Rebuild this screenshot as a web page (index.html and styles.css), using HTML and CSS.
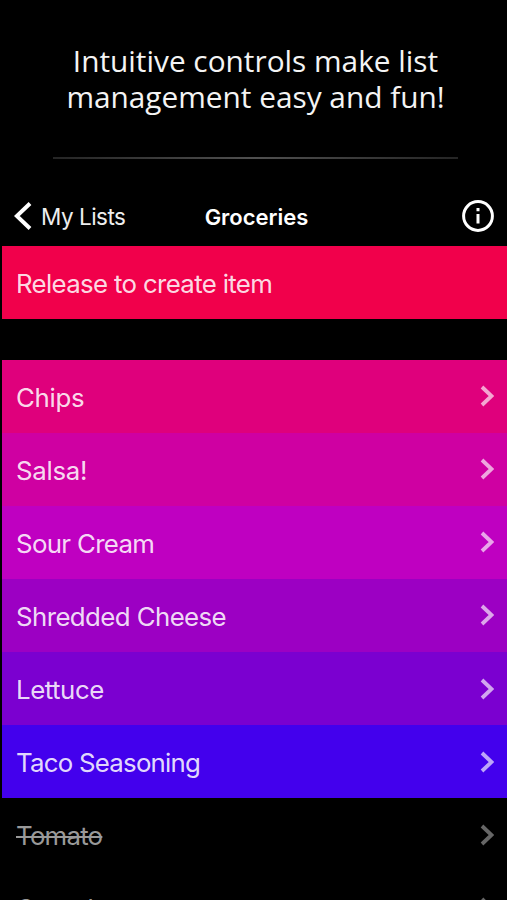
FILE: index.html
```html
<!DOCTYPE html>
<html lang="en">
<head>
<meta charset="utf-8">
<title>Groceries</title>
<link rel="stylesheet" href="styles.css">
</head>
<body>
<svg class="defs" aria-hidden="true"><symbol id="chevron" viewBox="0 0 14 22"><path d="M2 2 11.5 11 2 20"/></symbol></svg>
<main class="screen">
  <h1 class="headline">Intuitive controls make list<br>management easy and fun!</h1>
  <hr class="divider">
  <section class="phone">
    <header class="nav">
      <a class="back"><svg class="back-icon" viewBox="0 0 18 30"><path d="M16 2.5 2.8 15 16 27.5"/></svg><span class="back-label">My Lists</span></a>
      <h2 class="title">Groceries</h2>
      <svg class="info" viewBox="0 0 32 32"><circle cx="16" cy="16" r="14.4"/><path d="M16 14v9.5M16 8v3.3"/></svg>
    </header>
    <div class="row create"><span class="label">Release to create item</span></div>
    <ul class="list">
      <li class="row chips"><span class="label">Chips</span><svg class="arrow"><use href="#chevron"/></svg></li>
      <li class="row salsa"><span class="label">Salsa!</span><svg class="arrow"><use href="#chevron"/></svg></li>
      <li class="row cream"><span class="label">Sour Cream</span><svg class="arrow"><use href="#chevron"/></svg></li>
      <li class="row cheese"><span class="label">Shredded Cheese</span><svg class="arrow"><use href="#chevron"/></svg></li>
      <li class="row lettuce"><span class="label">Lettuce</span><svg class="arrow"><use href="#chevron"/></svg></li>
      <li class="row taco"><span class="label">Taco Seasoning</span><svg class="arrow"><use href="#chevron"/></svg></li>
      <li class="row done tomato"><span class="label">Tomato</span><svg class="arrow"><use href="#chevron"/></svg></li>
      <li class="row done"><span class="label">Cereal</span><svg class="arrow"><use href="#chevron"/></svg></li>
    </ul>
  </section>
</main>
</body>
</html>
```
FILE: styles.css
```css
* { box-sizing: border-box; }
body { margin: 0; background: #000; color: #fff; font-family: Inter, "Liberation Sans", sans-serif; }
.defs { display: block; width: 0; height: 0; }
.screen { height: 900px; overflow: hidden; padding-top: 43px; }
.headline { margin: 0; padding-left: 4px; font: 400 29.8px/36px "Open Sans", sans-serif; text-align: center; white-space: nowrap; color: #f4f4f4; }
.divider { width: 405px; height: 2px; margin: 42px 0 0 53px; border: 0; background: linear-gradient(90deg, #252525, #505050 50%, #252525); }
.phone { margin-left: 2px; padding-top: 27px; }
.nav { display: grid; grid-template-columns: 1fr auto 1fr; align-items: center; height: 60px; padding: 0 13px 0 12px; }
.back { display: flex; align-items: center; gap: 9px; }
.back-icon { width: 18px; height: 30px; }
.back-icon path { stroke-width: 4; }
.back-label { padding-top: 1px; font-size: 22.5px; letter-spacing: -.5px; color: #eee; }
.title { margin: 0; padding: 1px 0 0 5px; font-size: 22px; font-weight: 600; letter-spacing: 0; }
.info { width: 32px; height: 32px; justify-self: end; }
svg path, svg circle { fill: none; stroke: currentColor; stroke-width: 3; }
#chevron path { stroke-width: 3.8; }
.row { display: flex; align-items: center; justify-content: space-between; height: 73.1px; padding: 0 13px 0 14px; }
.label { padding-top: 2px; font-size: 25.8px; letter-spacing: -.3px; color: rgba(255,255,255,.87); white-space: nowrap; }
.arrow { width: 14px; height: 22px; color: rgba(255,255,255,.65); }
.list { margin: 40.5px 0 0; padding: 0; list-style: none; }
.create { background: #f1004b; }
.chips { background: #df007c; }
.salsa { background: #cf00a2; }
.cream { background: #bf00c1; }
.cheese { background: #9c00c3; }
.lettuce { background: #7b00d0; }
.taco { background: #4300ed; }
.create .label, .cream .label { letter-spacing: -.65px; }
.cheese .label { letter-spacing: -.57px; }
.taco .label, .tomato .label { letter-spacing: -.75px; }
.lettuce .label { letter-spacing: -.45px; }
.done .label { color: #999; text-decoration: line-through; text-decoration-thickness: 2px; }
.done .arrow { color: #666; }
```
